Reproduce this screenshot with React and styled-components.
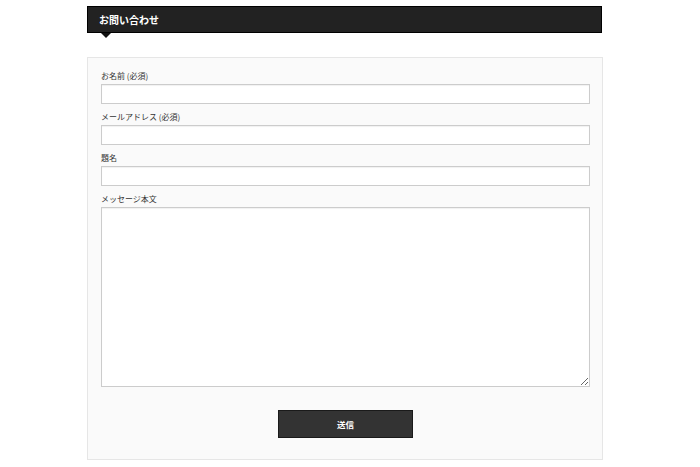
import React from "react";
import styled, { createGlobalStyle } from "styled-components";

const GlobalStyle = createGlobalStyle`
  html, body {
    margin: 0;
    padding: 0;
    background: #fff;
    font-family: "Noto Sans CJK JP", "Noto Sans", sans-serif;
    color: #333;
  }
`;

const Page = styled.div`
  padding: 6px 0 0 87px;
`;

const Wrapper = styled.div`
  width: 516px;
`;

const Heading = styled.h2`
  position: relative;
  box-sizing: border-box;
  margin: 0;
  height: 27px;
  width: 515px;
  padding: 0 11px;
  display: flex;
  align-items: center;
  background: #222;
  border: 1px solid #000;
  color: #fff;
  font-size: 10px;
  font-weight: bold;
  &::after {
    content: "";
    position: absolute;
    left: 13px;
    bottom: -6px;
    border-top: 5px solid #111;
    border-left: 5px solid transparent;
    border-right: 5px solid transparent;
  }
`;

const Panel = styled.form`
  box-sizing: border-box;
  margin-top: 24px;
  width: 516px;
  padding: 13px 12px 21px 13px;
  background: #fafafa;
  border: 1px solid #e6e6e6;
  display: flex;
  flex-direction: column;
  gap: 8px;
`;

const Field = styled.div`
  display: flex;
  flex-direction: column;
`;

const Label = styled.label`
  font-size: 8px;
  line-height: 10px;
  margin-bottom: 3px;
  color: #333;
`;

const Input = styled.input`
  box-sizing: border-box;
  width: 100%;
  height: 20px;
  margin: 0;
  padding: 2px 4px;
  border: 1px solid #ccc;
  background: #fff;
  box-shadow: inset 0 1px 1px rgba(0, 0, 0, 0.06);
  font-family: inherit;
  font-size: 9px;
  outline: none;
`;

const TextArea = styled.textarea`
  box-sizing: border-box;
  width: 100%;
  height: 180px;
  margin: 0;
  padding: 4px;
  border: 1px solid #ccc;
  background: #fff;
  box-shadow: inset 0 1px 1px rgba(0, 0, 0, 0.06);
  font-family: inherit;
  font-size: 9px;
  outline: none;
  resize: both;
  display: block;
`;

const Actions = styled.div`
  display: flex;
  justify-content: center;
  margin-top: 15px;
`;

const Submit = styled.button`
  box-sizing: border-box;
  width: 135px;
  height: 28px;
  background: #333;
  border: 1px solid #1a1a1a;
  color: #fff;
  font-family: inherit;
  font-size: 8.5px;
  font-weight: bold;
  cursor: pointer;
`;

const fields = [
  { id: "name", label: "お名前 (必須)" },
  { id: "email", label: "メールアドレス (必須)" },
  { id: "subject", label: "題名" },
];

export default function App() {
  return (
    <>
      <GlobalStyle />
      <Page>
        <Wrapper>
          <Heading>お問い合わせ</Heading>
          <Panel onSubmit={(e) => e.preventDefault()}>
            {fields.map((f) => (
              <Field key={f.id}>
                <Label htmlFor={f.id}>{f.label}</Label>
                <Input id={f.id} type="text" />
              </Field>
            ))}
            <Field>
              <Label htmlFor="message">メッセージ本文</Label>
              <TextArea id="message" />
            </Field>
            <Actions>
              <Submit type="submit">送信</Submit>
            </Actions>
          </Panel>
        </Wrapper>
      </Page>
    </>
  );
}
